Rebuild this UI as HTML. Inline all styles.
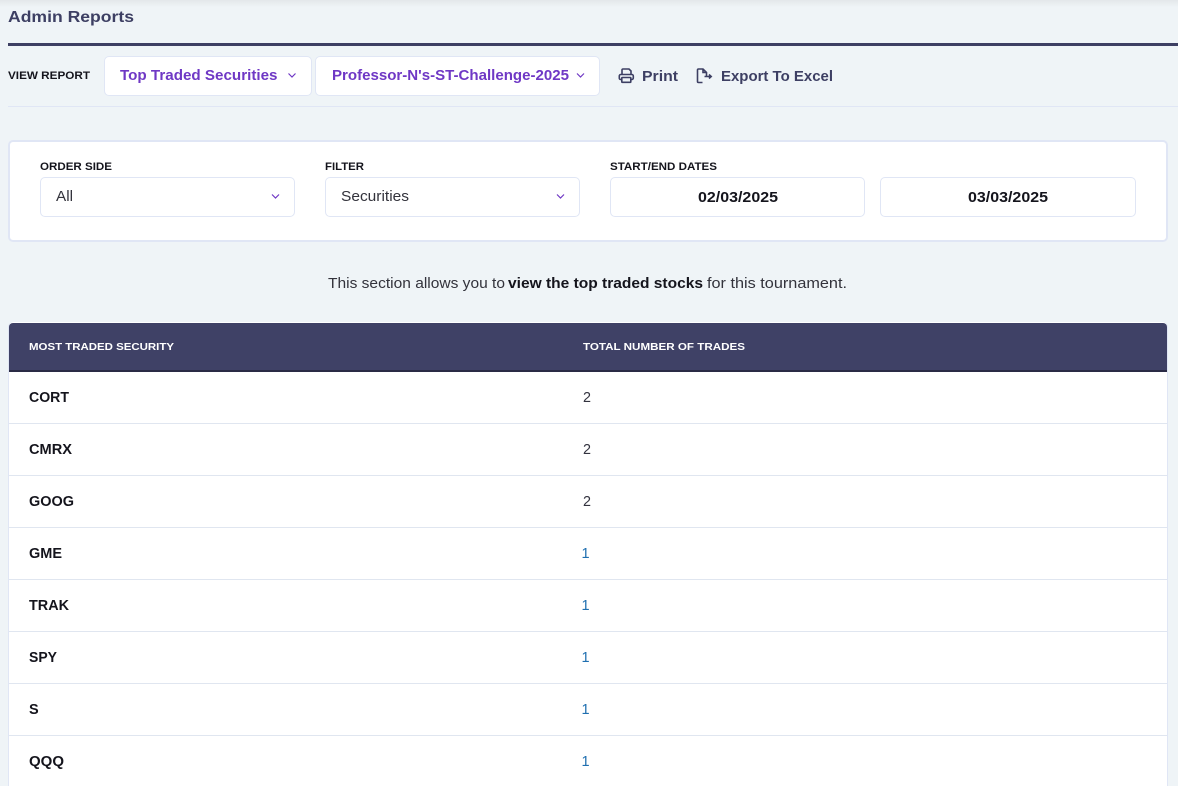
<!DOCTYPE html>
<html lang="en"><head><meta charset="utf-8"><title>Admin Reports</title>
<style>
html,body{margin:0;padding:0;width:1178px;height:786px;overflow:hidden;background:#eff4f7}
body{position:relative;font-family:"Liberation Sans",sans-serif}
.b{position:absolute;box-sizing:border-box}
.box{background:#fff;border:1px solid #e0e6f5;border-radius:5px}
svg.o{position:absolute;left:0;top:0}
text{font-family:"Liberation Sans",sans-serif}
.p{fill:#6f38c5;font-size:14.500px;font-weight:700}
.n{fill:#3d3f63;font-size:14.500px;font-weight:700}
.l{fill:#14141c;font-size:11px;font-weight:700}
.th{fill:#fff;font-size:10.500px;font-weight:700}
.s{fill:#14141c;font-size:14.500px;font-weight:700}
.v{fill:#33333c;font-size:14.500px}
.w{fill:#1f6fb0;font-size:14.500px}
.r{fill:#33333f;font-size:14.500px}
</style></head><body>
<div class="b" style="left:0;top:0;width:1178px;height:7px;background:linear-gradient(#e3e7ea,#eff4f7)"></div>
<div class="b" style="left:8px;top:43px;width:1170px;height:3px;background:#3d3f63"></div>
<div class="b" style="left:8px;top:106px;width:1170px;height:1px;background:#e0e6f5"></div>
<div class="b box" style="left:104px;top:56px;width:208px;height:40px"></div>
<div class="b box" style="left:315px;top:56px;width:285px;height:40px"></div>
<div class="b box" style="left:8px;top:140px;width:1160px;height:102px;border-width:2px"></div>
<div class="b box" style="left:40px;top:177px;width:255px;height:40px"></div>
<div class="b box" style="left:325px;top:177px;width:255px;height:40px"></div>
<div class="b box" style="left:610px;top:177px;width:255px;height:40px"></div>
<div class="b box" style="left:880px;top:177px;width:256px;height:40px"></div>
<div class="b" style="left:8px;top:322px;width:1160px;height:470px;background:#fff;border:1px solid #e0e6f5;border-top:0;border-radius:5px 5px 0 0"></div>
<div class="b" style="left:9px;top:323px;width:1158px;height:49px;background:#3f4166;border-bottom:2px solid #2a2b45;border-radius:4px 4px 0 0"></div>
<div class="b" style="left:9px;top:423px;width:1158px;height:1px;background:#e0e6f0"></div>
<div class="b" style="left:9px;top:475px;width:1158px;height:1px;background:#e0e6f0"></div>
<div class="b" style="left:9px;top:527px;width:1158px;height:1px;background:#e0e6f0"></div>
<div class="b" style="left:9px;top:579px;width:1158px;height:1px;background:#e0e6f0"></div>
<div class="b" style="left:9px;top:631px;width:1158px;height:1px;background:#e0e6f0"></div>
<div class="b" style="left:9px;top:683px;width:1158px;height:1px;background:#e0e6f0"></div>
<div class="b" style="left:9px;top:735px;width:1158px;height:1px;background:#e0e6f0"></div>
<svg class="o" width="1178" height="786" viewBox="0 0 1178 786" xmlns="http://www.w3.org/2000/svg">
<text x="8" y="22" textLength="126" lengthAdjust="spacingAndGlyphs" font-size="16" font-weight="700" fill="#3d3f63">Admin Reports</text>
<text class="l" x="8" y="79" textLength="82" lengthAdjust="spacingAndGlyphs">VIEW REPORT</text>
<text class="p" x="120" y="80" textLength="157.500" lengthAdjust="spacingAndGlyphs">Top Traded Securities</text>
<text class="p" x="332" y="80" textLength="237" lengthAdjust="spacingAndGlyphs">Professor-N's-ST-Challenge-2025</text>
<text class="n" x="642" y="81" textLength="36" lengthAdjust="spacingAndGlyphs">Print</text>
<text class="n" x="721" y="81" textLength="112" lengthAdjust="spacingAndGlyphs">Export To Excel</text>
<g fill="none" stroke="#6f38c5" stroke-width="1.200">
<path d="M288.500 73.500l3.500 3.500 3.500-3.500"/><path d="M577 73.500l3.500 3.500 3.500-3.500"/>
<path d="M272 194.500l3.500 3.500 3.500-3.500"/><path d="M557 194.500l3.500 3.500 3.500-3.500"/>
</g>
<g fill="none" stroke="#3d3f63" stroke-width="1.600">
<path d="M622 74.500v-4.500a1 1 0 0 1 1-1h6l2 2v3.500"/><path d="M621.500 79.500h-1a1.500 1.500 0 0 1-1.200-1.500v-2a1.500 1.500 0 0 1 1.500-1.500h11a1.500 1.500 0 0 1 1.500 1.500v2a1.500 1.500 0 0 1-1.500 1.500h-1"/><rect x="621.800" y="77.500" width="9" height="4.800" rx=".5"/>
<path d="M702.500 82.500h-4a1 1 0 0 1-1-1v-11.500a1 1 0 0 1 1-1h4.500l3.500 3.500v3.500M703 69v3.500h3.500"/><path d="M704.500 76.500h6.500M709 74.500l2.200 2-2.200 2"/>
</g>
<text class="l" x="40" y="170" textLength="72" lengthAdjust="spacingAndGlyphs">ORDER SIDE</text>
<text class="l" x="325" y="170" textLength="39" lengthAdjust="spacingAndGlyphs">FILTER</text>
<text class="l" x="610" y="170" textLength="107" lengthAdjust="spacingAndGlyphs">START/END DATES</text>
<text class="v" x="56" y="201" textLength="17" lengthAdjust="spacingAndGlyphs">All</text>
<text class="v" x="341" y="201" textLength="68" lengthAdjust="spacingAndGlyphs">Securities</text>
<text class="s" x="698" y="202" textLength="80" lengthAdjust="spacingAndGlyphs">02/03/2025</text>
<text class="s" x="968" y="202" textLength="80" lengthAdjust="spacingAndGlyphs">03/03/2025</text>
<text class="v" x="328" y="288" textLength="177" lengthAdjust="spacingAndGlyphs">This section allows you to</text>
<text class="s" x="508" y="288" textLength="195" lengthAdjust="spacingAndGlyphs">view the top traded stocks</text>
<text class="v" x="707" y="288" textLength="140" lengthAdjust="spacingAndGlyphs">for this tournament.</text>
<text class="th" x="29" y="350" textLength="145" lengthAdjust="spacingAndGlyphs">MOST TRADED SECURITY</text>
<text class="th" x="583" y="350" textLength="162" lengthAdjust="spacingAndGlyphs">TOTAL NUMBER OF TRADES</text>
<text class="s" x="29" y="402" textLength="40" lengthAdjust="spacingAndGlyphs">CORT</text>
<text class="s" x="29" y="454" textLength="43" lengthAdjust="spacingAndGlyphs">CMRX</text>
<text class="s" x="29" y="506" textLength="45" lengthAdjust="spacingAndGlyphs">GOOG</text>
<text class="s" x="29" y="558" textLength="33" lengthAdjust="spacingAndGlyphs">GME</text>
<text class="s" x="29" y="610" textLength="40" lengthAdjust="spacingAndGlyphs">TRAK</text>
<text class="s" x="29" y="662" textLength="28" lengthAdjust="spacingAndGlyphs">SPY</text>
<text class="s" x="29" y="714">S</text>
<text class="s" x="29" y="766" textLength="35" lengthAdjust="spacingAndGlyphs">QQQ</text>
<text class="r" x="583" y="402" textLength="8" lengthAdjust="spacingAndGlyphs">2</text>
<text class="r" x="583" y="454" textLength="8" lengthAdjust="spacingAndGlyphs">2</text>
<text class="r" x="583" y="506" textLength="8" lengthAdjust="spacingAndGlyphs">2</text>
<text class="w" x="581.500" y="558">1</text>
<text class="w" x="581.500" y="610">1</text>
<text class="w" x="581.500" y="662">1</text>
<text class="w" x="581.500" y="714">1</text>
<text class="w" x="581.500" y="766">1</text>
</svg>
</body></html>
